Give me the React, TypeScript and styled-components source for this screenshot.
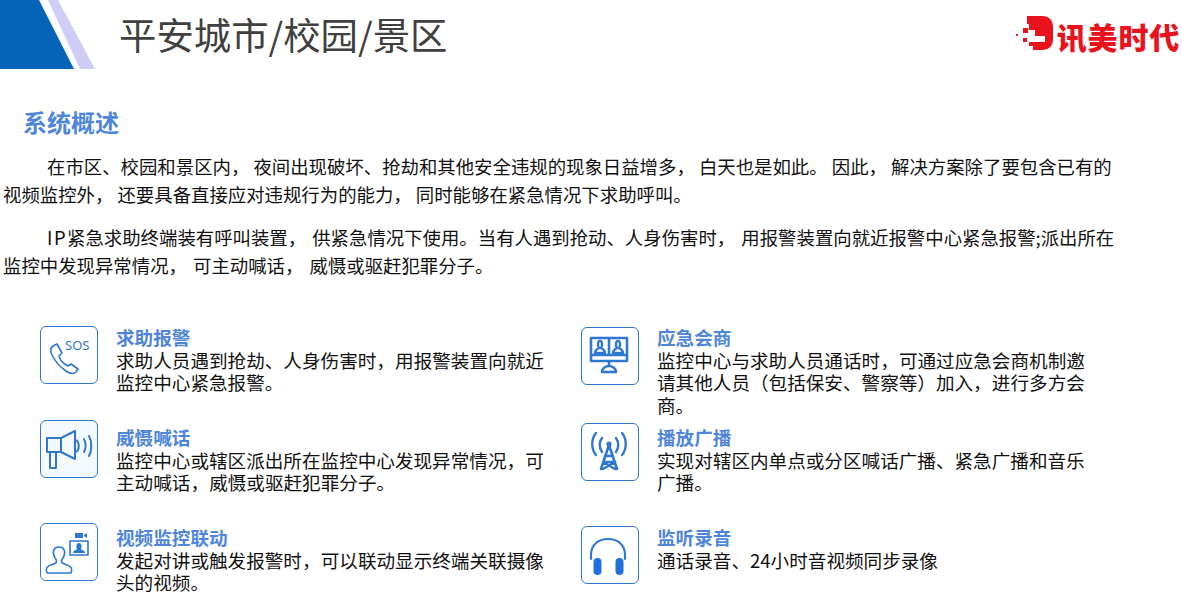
import { ReactNode } from "react"
import styled, { createGlobalStyle } from "styled-components"

const GlobalStyle = createGlobalStyle`
  html, body {
    margin: 0;
    padding: 0;
    background: #fff;
    font-family: "Noto Sans CJK SC", "Noto Sans", sans-serif;
  }
`

const Page = styled.div`
  width: 1182px;
  height: 594px;
  overflow: hidden;
  color: #111;
`

const Header = styled.header`
  height: 69px;
  display: flex;
  align-items: center;
`

const Corner = styled.svg`
  width: 96px;
  height: 69px;
  flex: none;
`

const PageTitle = styled.h1`
  margin: 0 0 0 23px;
  font-size: 37.4px;
  font-weight: 400;
  line-height: 69px;
  color: #404040;
  flex: 1;
`

const Logo = styled.div`
  display: flex;
  align-items: center;
  gap: 3px;
  margin: 0 2px 3px 0;
`

const LogoText = styled.span`
  font-size: 30px;
  line-height: 36px;
  font-weight: 900;
  color: #e8131c;
  margin-top: 5px;
  letter-spacing: 0.8px;
`

const Overview = styled.h2`
  margin: 36px 0 0 23px;
  font-size: 24px;
  line-height: 34px;
  font-weight: 700;
  color: #4f86d9;
`

const Paragraph = styled.p<{ $wordGap?: number }>`
  margin: 13px 0 0 3px;
  font-size: 18.4px;
  line-height: 28px;
  white-space: pre;
  text-indent: 44px;
  word-spacing: ${(props) => props.$wordGap ?? 0}px;
  & + & {
    margin-top: 15px;
  }
`

const Latin = styled.span`
  letter-spacing: 1.5px;
`

const FeatureGrid = styled.section`
  display: grid;
  grid-template-columns: 541px 1fr;
  grid-template-rows: 94px 103px 70px;
  margin: 47px 0 0 40px;
`

const Feature = styled.article`
  display: flex;
  gap: 18px;
`

const IconBox = styled.div<{ $top: number; $tint?: boolean }>`
  width: 58px;
  height: 58px;
  margin-top: ${(props) => props.$top}px;
  flex: none;
  box-sizing: border-box;
  border: 1.5px solid #2f78cf;
  border-radius: 6px;
  background: ${(props) => (props.$tint ? "#f3f9fd" : "#fff")};
  display: flex;
  align-items: center;
  justify-content: center;
`

const FeatureBody = styled.div<{ $top: number }>`
  margin-top: ${(props) => props.$top}px;
  font-size: 18.6px;
  line-height: 22.5px;
  word-spacing: -4px;
  white-space: pre;
`

const FeatureTitle = styled.div`
  font-weight: 700;
  color: #4f86d9;
`

const SosLabel = styled.text`
  font-family: "Noto Sans", sans-serif;
  font-size: 13px;
  fill: #2f78cf;
`

const Glyph = ({ children }: { children: ReactNode }) => (
  <svg width="52" height="52" viewBox="0 0 52 52" fill="none" stroke="#2f78cf" strokeWidth="1.6" strokeLinecap="round" strokeLinejoin="round">
    {children}
  </svg>
)

const SosIcon = () => (
  <Glyph>
    <SosLabel x="22" y="21" stroke="none">SOS</SosLabel>
    <path d="M10 17l4-2 5 9-3 3c1 4 5 8 9 10l3-2 7 5-2 3c-2 2-6 2-10-1-6-4-11-10-14-16-2-4-2-7 1-9z" />
  </Glyph>
)

const MegaphoneIcon = () => (
  <Glyph>
    <path strokeWidth="2" d="M4 15h14v14H4zM18 15l14-7v28l-14-7M7 29v16h6V29" />
    <path strokeWidth="2" d="M32 17c5 1 5 11 0 12M41 16c2 4 2 9 0 13M46 13c3 5 3 14 0 20" />
  </Glyph>
)

const VideoLinkIcon = () => (
  <Glyph>
    <path d="M4 47c-2-4 0-7 4-8l5-2c1-2 1-3-1-5-3-5-2-11 4-11s7 6 4 11c-2 2-2 3-1 5l5 2c4 1 6 4 4 8z" />
    <path fill="#2f78cf" stroke="none" d="M32 7h8v5h-8zM41 9l3-2v5l-3-2z" />
    <path d="M27 15h18v14H27z" />
    <path fill="#2f78cf" stroke="none" d="M36 17c3 0 3 4 2 6 0 1 4 1 4 4H30c0-3 4-3 4-4-1-2-1-6 2-6z" />
  </Glyph>
)

const ConferenceIcon = () => (
  <Glyph>
    <path strokeWidth="2.6" d="M7 8h36v23H7zM25 8v17M7 25h36M25 31v5" />
    <path strokeWidth="2.4" d="M11 23c0-3 2-4 4-5-2-3-1-7 1-7s3 4 1 7c2 1 4 2 4 5zM29 23c0-3 2-4 4-5-2-3-1-7 1-7s3 4 1 7c2 1 4 2 4 5z" />
    <path fill="#fff" strokeWidth="2.6" d="M18 42c0-4 4-6 7-6s7 2 7 6z" />
  </Glyph>
)

const BroadcastIcon = () => (
  <Glyph>
    <path strokeWidth="2.4" d="M12 7C7 13 7 23 12 29M38 7c5 6 5 16 0 22M18 12c-3 4-3 10 0 14M32 12c3 4 3 10 0 14" />
    <circle cx="25" cy="18" r="2.6" fill="#2f78cf" stroke="none" />
    <path strokeWidth="2.6" d="M25 19l-8 24M25 19l8 24M21 30h8M19 36h12M19 36l12 7M31 36l-12 7" />
  </Glyph>
)

const HeadphoneIcon = () => (
  <Glyph>
    <path strokeWidth="2.2" d="M7 30v-4C7 16 14 10 24 10s17 6 17 16v4" />
    <rect x="9.5" y="29" width="8" height="17" rx="4" fill="#1f6fdc" stroke="none" />
    <rect x="31.5" y="29" width="8" height="17" rx="4" fill="#1f6fdc" stroke="none" />
  </Glyph>
)

const features = [
  { title: "求助报警", lines: ["求助人员遇到抢劫、人身伤害时， 用报警装置向就近", "监控中心紧急报警。"], icon: <SosIcon />, iconTop: 0, textTop: 0 },
  { title: "应急会商", lines: ["监控中心与求助人员通话时， 可通过应急会商机制邀", "请其他人员（包括保安、警察等）加入， 进行多方会", "商。"], icon: <ConferenceIcon />, iconTop: 1, textTop: 0 },
  { title: "威慑喊话", lines: ["监控中心或辖区派出所在监控中心发现异常情况， 可", "主动喊话， 威慑或驱赶犯罪分子。"], icon: <MegaphoneIcon />, iconTop: 0, textTop: 6, tint: true },
  { title: "播放广播", lines: ["实现对辖区内单点或分区喊话广播、紧急广播和音乐", "广播。"], icon: <BroadcastIcon />, iconTop: 3, textTop: 6 },
  { title: "视频监控联动", lines: ["发起对讲或触发报警时， 可以联动显示终端关联摄像", "头的视频。"], icon: <VideoLinkIcon />, iconTop: 0, textTop: 3 },
  { title: "监听录音", lines: ["通话录音、24小时音视频同步录像"], icon: <HeadphoneIcon />, iconTop: 3, textTop: 3 },
]

export default function App() {
  return (
    <Page>
      <GlobalStyle />
      <Header>
        <Corner viewBox="0 0 96 69">
          <path fill="#0563b8" d="M0 0h39l35 69H0z" />
          <path fill="#cfcdf5" d="M48 0h10l37 69H80z" />
        </Corner>
        <PageTitle>平安城市/校园/景区</PageTitle>
        <Logo>
          <svg width="38" height="34" viewBox="0 0 38 34">
            <path fill="#e8131c" d="M11 0H26C33 0 37 4 37 11V23C37 30 33 34 26 34H17V30H13V26H29V20H19V14H13V8H11z" />
            <path fill="#e8131c" d="M0 18h2v2H0zM7 22h4v4H7zM7 12h5v5H7z" />
          </svg>
          <LogoText>讯美时代</LogoText>
        </Logo>
      </Header>
      <Overview>系统概述</Overview>
      <Paragraph>{"在市区、校园和景区内， 夜间出现破坏、抢劫和其他安全违规的现象日益增多， 白天也是如此。 因此， 解决方案除了要包含已有的\n视频监控外， 还要具备直接应对违规行为的能力， 同时能够在紧急情况下求助呼叫。"}</Paragraph>
      <Paragraph $wordGap={2}>
        <Latin>IP</Latin>
        {"紧急求助终端装有呼叫装置， 供紧急情况下使用。当有人遇到抢动、人身伤害时， 用报警装置向就近报警中心紧急报警;派出所在\n监控中发现异常情况， 可主动喊话， 威慑或驱赶犯罪分子。"}
      </Paragraph>
      <FeatureGrid>
        {features.map((feature) => (
          <Feature key={feature.title}>
            <IconBox $top={feature.iconTop} $tint={feature.tint}>{feature.icon}</IconBox>
            <FeatureBody $top={feature.textTop}>
              <FeatureTitle>{feature.title}</FeatureTitle>
              {feature.lines.join("\n")}
            </FeatureBody>
          </Feature>
        ))}
      </FeatureGrid>
    </Page>
  )
}
